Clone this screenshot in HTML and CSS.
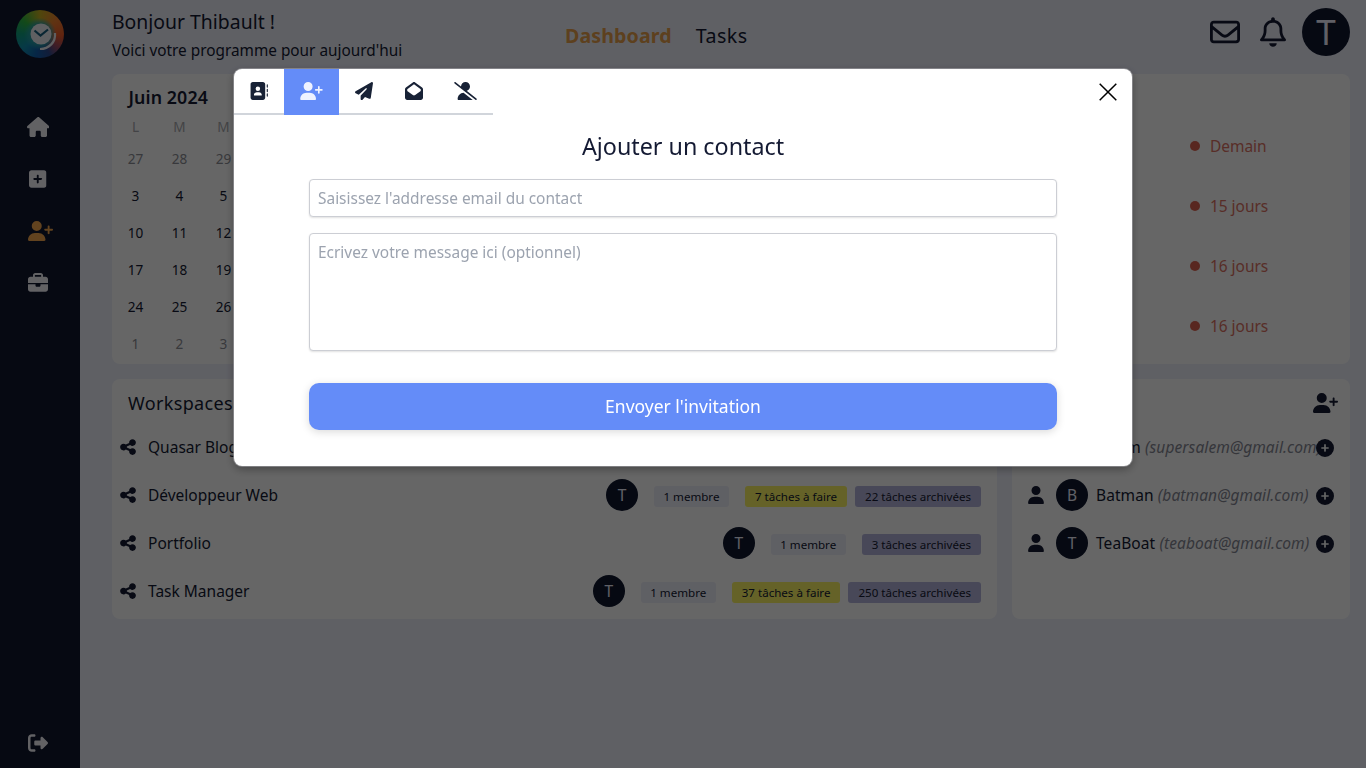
FILE: index.html
```html
<!DOCTYPE html>
<html lang="fr">
<head>
<meta charset="utf-8">
<title>Dashboard</title>
<link rel="stylesheet" href="styles.css">
</head>
<body>
<svg class="sprite" aria-hidden="true">
  <symbol id="house" viewBox="0 0 576 512"><path d="M575.8 255.5c0 18-15 32.1-32 32.1h-32l.7 160.2c0 2.7-.2 5.4-.5 8.1V472c0 22.1-17.9 40-40 40H456c-1.1 0-2.2 0-3.3-.1c-1.4 .1-2.8 .1-4.2 .1H416 392c-22.1 0-40-17.9-40-40V448 384c0-17.7-14.3-32-32-32H256c-17.7 0-32 14.3-32 32v64 24c0 22.1-17.9 40-40 40H160 128.1c-1.5 0-3-.1-4.5-.2c-1.2 .1-2.4 .2-3.6 .2H104c-22.1 0-40-17.9-40-40V360c0-.9 0-1.9 .1-2.8V287.6H32c-18 0-32-14-32-32.1c0-9 3-17 10-24L266.4 8c7-7 15-8 22-8s15 2 21 7L564.8 231.5c8 7 12 15 11 24z"/></symbol>
  <symbol id="square-plus" viewBox="0 0 448 512"><path d="M64 32C28.7 32 0 60.7 0 96V416c0 35.3 28.7 64 64 64H384c35.3 0 64-28.7 64-64V96c0-35.3-28.7-64-64-64H64zM200 344V280H136c-13.3 0-24-10.7-24-24s10.7-24 24-24h64V168c0-13.3 10.7-24 24-24s24 10.7 24 24v64h64c13.3 0 24 10.7 24 24s-10.7 24-24 24H248v64c0 13.3-10.7 24-24 24s-24-10.7-24-24z"/></symbol>
  <symbol id="user" viewBox="0 0 448 512"><path d="M224 256A128 128 0 1 0 224 0a128 128 0 1 0 0 256zm-45.7 48C79.8 304 0 383.8 0 482.3C0 498.7 13.3 512 29.7 512H418.3c16.4 0 29.7-13.3 29.7-29.7C448 383.8 368.2 304 269.7 304H178.3z"/></symbol>
  <symbol id="user-plus" viewBox="0 0 640 512"><path d="M96 128a128 128 0 1 1 256 0A128 128 0 1 1 96 128zM0 482.3C0 383.8 79.8 304 178.3 304h91.4C368.2 304 448 383.8 448 482.3c0 16.4-13.3 29.7-29.7 29.7H29.7C13.3 512 0 498.7 0 482.3zM504 312V248H440c-13.3 0-24-10.7-24-24s10.7-24 24-24h64V136c0-13.3 10.7-24 24-24s24 10.7 24 24v64h64c13.3 0 24 10.7 24 24s-10.7 24-24 24H552v64c0 13.3-10.7 24-24 24s-24-10.7-24-24z"/></symbol>
  <symbol id="briefcase" viewBox="0 0 512 512"><path d="M184 48H328c4.4 0 8 3.6 8 8V96H176V56c0-4.4 3.6-8 8-8zm-56 8V96H64C28.7 96 0 124.7 0 160v96H192 320 512V160c0-35.3-28.7-64-64-64H384V56c0-30.9-25.1-56-56-56H184c-30.9 0-56 25.1-56 56zM512 288H320v32c0 17.7-14.3 32-32 32H224c-17.7 0-32-14.3-32-32V288H0V416c0 35.3 28.7 64 64 64H448c35.3 0 64-28.7 64-64V288z"/></symbol>
  <symbol id="logout" viewBox="0 0 512 512"><path d="M377.9 105.9L500.7 228.7c7.2 7.2 11.3 17.1 11.3 27.3s-4.1 20.1-11.3 27.3L377.9 406.1c-6.4 6.4-15 9.9-24 9.9c-18.7 0-33.9-15.2-33.9-33.9l0-62.1-128 0c-17.7 0-32-14.3-32-32l0-64c0-17.7 14.3-32 32-32l128 0 0-62.1c0-18.7 15.2-33.9 33.9-33.9c9 0 17.6 3.6 24 9.9zM160 96L96 96c-17.7 0-32 14.3-32 32l0 256c0 17.7 14.3 32 32 32l64 0c17.7 0 32 14.3 32 32s-14.3 32-32 32l-64 0c-53 0-96-43-96-96L0 128C0 75 43 32 96 32l64 0c17.7 0 32 14.3 32 32s-14.3 32-32 32z"/></symbol>
  <symbol id="share" viewBox="0 0 448 512"><path d="M352 224c53 0 96-43 96-96s-43-96-96-96s-96 43-96 96c0 4 .2 8 .7 11.9l-94.1 47C145.4 170.2 121.9 160 96 160c-53 0-96 43-96 96s43 96 96 96c25.9 0 49.4-10.2 66.6-26.9l94.1 47c-.5 3.9-.7 7.8-.7 11.9c0 53 43 96 96 96s96-43 96-96s-43-96-96-96c-25.9 0-49.4 10.2-66.6 26.9l-94.1-47c.5-3.9 .7-7.8 .7-11.9s-.2-8-.7-11.9l94.1-47C302.6 213.8 326.1 224 352 224z"/></symbol>
  <symbol id="envelope" viewBox="0 0 512 512"><path d="M64 112c-8.8 0-16 7.2-16 16v22.1L220.5 291.7c20.7 17 50.4 17 71.1 0L464 150.1V128c0-8.8-7.2-16-16-16H64zM48 212.2V384c0 8.8 7.2 16 16 16H448c8.8 0 16-7.2 16-16V212.2L322 328.8c-38.4 31.5-93.7 31.5-132 0L48 212.2zM0 128C0 92.7 28.7 64 64 64H448c35.3 0 64 28.7 64 64V384c0 35.3-28.7 64-64 64H64c-35.3 0-64-28.7-64-64V128z"/></symbol>
  <symbol id="bell" viewBox="0 0 448 512"><path d="M224 0c-17.7 0-32 14.3-32 32V49.9C119.5 61.4 64 124.2 64 200v33.4c0 45.4-15.5 89.5-43.8 124.9L5.3 377c-5.8 7.2-6.9 17.1-2.9 25.4S14.8 416 24 416H424c9.2 0 17.6-5.3 21.6-13.6s2.9-18.2-2.9-25.4l-14.9-18.6C399.5 322.9 384 278.8 384 233.4V200c0-75.8-55.5-138.6-128-150.1V32c0-17.7-14.3-32-32-32zm0 96h8c57.4 0 104 46.6 104 104v33.4c0 47.9 13.9 94.6 39.7 134.6H72.3C98.1 328 112 281.3 112 233.4V200c0-57.4 46.6-104 104-104h8zm64 352H224 160c0 17 6.7 33.3 18.7 45.3s28.3 18.7 45.3 18.7s33.3-6.7 45.3-18.7s18.7-28.3 18.7-45.3z"/></symbol>
  <symbol id="plane" viewBox="0 0 512 512"><path d="M498.1 5.6c10.1 7 15.4 19.1 13.5 31.2l-64 416c-1.5 9.7-7.4 18.2-16 23s-18.9 5.4-28 1.6L284 427.7l-68.5 74.1c-8.9 9.7-22.9 12.9-35.2 8.1S160 493.2 160 480V396.4c0-4 1.5-7.8 4.2-10.7L331.8 202.8c5.8-6.3 5.6-16-.4-22s-15.7-6.4-22-.7L106 360.8 17.7 316.6C7.1 311.3 .3 300.7 0 288.9s5.9-22.8 16.1-28.7l448-256c10.7-6.1 23.9-5.5 34 1.4z"/></symbol>
  <symbol id="address-book" viewBox="0 0 512 512"><path d="M80 0C44.700 0 16 28.700 16 64V448c0 35.300 28.700 64 64 64H368c35.300 0 64-28.700 64-64V64c0-35.300-28.700-64-64-64H80zM192 288h64c44.200 0 80 35.800 80 80c0 8.800-7.200 16-16 16H128c-8.800 0-16-7.200-16-16c0-44.200 35.800-80 80-80zm-32-96a64 64 0 1 1 128 0 64 64 0 1 1 -128 0zM508 80c0-8.800-7.200-16-16-16s-16 7.200-16 16v64c0 8.800 7.200 16 16 16s16-7.200 16-16V80zM492 192c-8.800 0-16 7.200-16 16v64c0 8.800 7.200 16 16 16s16-7.200 16-16V208c0-8.800-7.200-16-16-16zm16 144c0-8.800-7.200-16-16-16s-16 7.200-16 16v64c0 8.800 7.200 16 16 16s16-7.200 16-16V336z"/></symbol>
  <symbol id="envelope-open" viewBox="0 0 512 512"><path d="M64 208.1L256 65.9 448 208.1v47.4L289.5 373c-9.7 7.2-21.4 11-33.5 11s-23.8-3.9-33.5-11L64 255.5V208.1zM256 0c-12.1 0-23.8 3.9-33.5 11L25.9 156.7C9.6 168.8 0 187.8 0 208.1V448c0 35.3 28.7 64 64 64H448c35.3 0 64-28.7 64-64V208.1c0-20.3-9.6-39.4-25.9-51.4L289.5 11C279.8 3.9 268.1 0 256 0z"/></symbol>
  <symbol id="user-slash" viewBox="0 0 640 512"><path d="M38.8 5.1C28.4-3.1 13.3-1.2 5.1 9.2S-1.2 34.7 9.2 42.9l592 464c10.4 8.2 25.5 6.3 33.7-4.1s6.3-25.5-4.1-33.7L353.3 251.6C407.9 237 448 187.2 448 128C448 57.3 390.7 0 320 0C250.2 0 193.5 55.8 192 125.2L38.8 5.1zM264.3 304.3C170.5 309.4 96 387.2 96 482.3c0 16.4 13.3 29.7 29.7 29.7H514.3c3.9 0 7.6-.7 11-2.1l-261-205.6z"/></symbol>
  <symbol id="circle-plus" viewBox="0 0 512 512"><path d="M256 512A256 256 0 1 0 256 0a256 256 0 1 0 0 512zM232 344V280H168c-13.3 0-24-10.7-24-24s10.7-24 24-24h64V168c0-13.3 10.7-24 24-24s24 10.7 24 24v64h64c13.3 0 24 10.7 24 24s-10.7 24-24 24H280v64c0 13.3-10.7 24-24 24s-24-10.7-24-24z"/></symbol>
</svg>

<div class="app">
  <aside class="sidebar">
    <div class="logo">
      <div class="logo-ring"></div>
      <svg class="logo-clock" viewBox="0 0 48 48">
        <circle class="logo-face" cx="25" cy="24" r="10.500"/>
        <path class="logo-hands" d="M18.500 20.500l6 5 7.500-6"/>
        <path class="logo-arc" d="M39 23c1 9-6 16-15 16"/>
      </svg>
    </div>
    <nav class="side-nav">
      <svg class="side-icon w-house"><use href="#house"/></svg>
      <svg class="side-icon w-square"><use href="#square-plus"/></svg>
      <svg class="side-icon w-user active"><use href="#user-plus"/></svg>
      <svg class="side-icon w-full"><use href="#briefcase"/></svg>
    </nav>
    <svg class="side-icon w-full"><use href="#logout"/></svg>
  </aside>

  <main class="main">
    <header class="header">
      <div class="greeting">
        <h1 class="hello">Bonjour Thibault !</h1>
        <p class="program">Voici votre programme pour aujourd'hui</p>
      </div>
      <nav class="top-nav">
        <a class="nav-link current">Dashboard</a>
        <a class="nav-link">Tasks</a>
      </nav>
      <div class="actions">
        <svg class="act-mail"><use href="#envelope"/></svg>
        <svg class="act-bell"><use href="#bell"/></svg>
        <div class="avatar large">T</div>
      </div>
    </header>

    <section class="card overview">
      <div class="calendar">
        <h2 class="month">Juin 2024</h2>
        <div class="days head"><span>L</span><span>M</span><span>M</span><span>J</span><span>V</span><span>S</span><span>D</span></div>
        <div class="days dim"><span>27</span><span>28</span><span>29</span><span>30</span><span>31</span><span>1</span><span>2</span></div>
        <div class="days"><span>3</span><span>4</span><span>5</span><span>6</span><span>7</span><span>8</span><span>9</span></div>
        <div class="days"><span>10</span><span>11</span><span>12</span><span>13</span><span>14</span><span>15</span><span>16</span></div>
        <div class="days"><span>17</span><span>18</span><span>19</span><span>20</span><span>21</span><span>22</span><span>23</span></div>
        <div class="days"><span>24</span><span>25</span><span>26</span><span>27</span><span>28</span><span>29</span><span>30</span></div>
        <div class="days dim"><span>1</span><span>2</span><span>3</span><span>4</span><span>5</span><span>6</span><span>7</span></div>
      </div>
      <ul class="deadlines">
        <li class="deadline"><i class="dot"></i>Demain</li>
        <li class="deadline"><i class="dot"></i>15 jours</li>
        <li class="deadline"><i class="dot"></i>16 jours</li>
        <li class="deadline"><i class="dot"></i>16 jours</li>
      </ul>
    </section>

    <div class="bottom">
      <section class="card workspaces">
        <h2 class="card-title">Workspaces</h2>
        <div class="row"><svg class="share"><use href="#share"/></svg><span class="ws-name">Quasar Blog</span></div>
        <div class="row"><svg class="share"><use href="#share"/></svg><span class="ws-name">Développeur Web</span>
          <div class="avatar">T</div><span class="badge member">1 membre</span><span class="badge todo">7 tâches à faire</span><span class="badge archived">22 tâches archivées</span></div>
        <div class="row"><svg class="share"><use href="#share"/></svg><span class="ws-name">Portfolio</span>
          <div class="avatar">T</div><span class="badge member">1 membre</span><span class="badge archived">3 tâches archivées</span></div>
        <div class="row"><svg class="share"><use href="#share"/></svg><span class="ws-name">Task Manager</span>
          <div class="avatar">T</div><span class="badge member">1 membre</span><span class="badge todo">37 tâches à faire</span><span class="badge archived">250 tâches archivées</span></div>
      </section>
      <section class="card contacts">
        <div class="contacts-head"><svg class="add-contact"><use href="#user-plus"/></svg></div>
        <div class="row contact"><svg class="person"><use href="#user"/></svg><div class="avatar">S</div><span class="c-name">Salem <em class="mail">(supersalem@gmail.com)</em></span><svg class="plus"><use href="#circle-plus"/></svg></div>
        <div class="row contact"><svg class="person"><use href="#user"/></svg><div class="avatar">B</div><span class="c-name">Batman <em class="mail">(batman@gmail.com)</em></span><svg class="plus"><use href="#circle-plus"/></svg></div>
        <div class="row contact"><svg class="person"><use href="#user"/></svg><div class="avatar">T</div><span class="c-name">TeaBoat <em class="mail">(teaboat@gmail.com)</em></span><svg class="plus"><use href="#circle-plus"/></svg></div>
      </section>
    </div>
  </main>
</div>

<div class="backdrop">
  <div class="modal">
    <div class="modal-top">
      <div class="tabs">
        <div class="tab"><svg class="tab-icon"><use href="#address-book"/></svg></div>
        <div class="tab selected"><svg class="tab-icon wide"><use href="#user-plus"/></svg></div>
        <div class="tab"><svg class="tab-icon"><use href="#plane"/></svg></div>
        <div class="tab"><svg class="tab-icon"><use href="#envelope-open"/></svg></div>
        <div class="tab"><svg class="tab-icon wide"><use href="#user-slash"/></svg></div>
      </div>
      <svg class="close" viewBox="0 0 18 18"><path d="M.7.7l16.600 16.600M17.300.7L.7 17.300" stroke="#000" stroke-width="1.500"/></svg>
    </div>
    <form class="form">
      <h2 class="form-title">Ajouter un contact</h2>
      <input class="field" type="text" placeholder="Saisissez l'addresse email du contact">
      <textarea class="field message" placeholder="Ecrivez votre message ici (optionnel)"></textarea>
      <button class="submit" type="button">Envoyer l'invitation</button>
    </form>
  </div>
</div>
</body>
</html>
```
FILE: styles.css
```css
* { box-sizing: border-box; margin: 0; padding: 0; }
body {
  height: 768px;
  overflow: hidden;
  font-family: "Noto Sans", sans-serif;
  font-size: 15.5px;
  line-height: 24px;
  color: #141a33;
  background: #eef0fb;
}
svg { flex: none; fill: currentColor; }
.sprite { display: none; }

.app { display: flex; height: 768px; }
.sidebar {
  width: 80px;
  padding: 10px 0 15px;
  display: flex;
  flex-direction: column;
  align-items: center;
  background: #0f172f;
  color: #f4f4fa;
}
.logo { display: grid; width: 48px; height: 48px; }
.logo-ring, .logo-clock { grid-area: 1 / 1; width: 48px; height: 48px; }
.logo-ring {
  border-radius: 50%;
  background:
    radial-gradient(circle, rgba(40, 160, 165, .8) 32%, transparent 48%),
    conic-gradient(#c8b020, #f08030 50deg, #f05a28 95deg, #a04a60 125deg, #2c4a90 155deg, #1060b0 190deg, #1090b0 230deg, #10a080 270deg, #30b840 310deg, #c8b020);
}
.logo-face { fill: #eef0f6; }
.logo-hands { fill: none; stroke: #17607f; stroke-width: 2.2; }
.logo-arc { fill: none; stroke: #eef0f6; stroke-width: 2.2; }
.side-nav {
  flex: 1;
  padding: 59px 0 0;
  display: flex;
  flex-direction: column;
  align-items: center;
  gap: 32px;
}
.side-icon { height: 20px; margin-right: 4px; }
.w-house { width: 22.5px; }
.w-square { width: 17.5px; }
.w-user { width: 25px; margin-right: 0; }
.w-full { width: 20px; }
.active { color: #f5a94e; }

.main { flex: 1; padding: 0 16px 0 32px; }
.header {
  height: 74px;
  display: grid;
  grid-template-columns: 453px 1fr auto;
}
.hello { padding-top: 8px; font-size: 19.4px; font-weight: 400; line-height: 28px; }
.program { padding-top: 2px; font-size: 15.35px; }
.top-nav { display: flex; gap: 24px; padding-top: 22px; font-size: 19.6px; line-height: 28px; letter-spacing: .1px; }
.nav-link:last-child { letter-spacing: .45px; }
.current { color: #e8a04c; font-weight: 700; }
.actions { display: flex; gap: 16px; padding-top: 8px; }
.act-mail { width: 30px; height: 30px; margin: 9px 4px 0 0; }
.act-bell { width: 26px; height: 30px; margin-top: 9px; }
.avatar {
  flex: none;
  width: 32px;
  height: 32px;
  border-radius: 50%;
  background: #0f172f;
  color: #eff1ff;
  text-align: center;
  line-height: 32px;
}
.avatar.large { width: 48px; height: 48px; font-size: 35px; line-height: 48px; }

.card { background: #fff; border-radius: 8px; }
.overview { height: 290px; display: flex; justify-content: space-between; }
.calendar { width: 310px; padding: 10px 0 0 1.5px; font-size: 13.6px; }
.month { padding-left: 15px; font-size: 17.8px; font-weight: 600; line-height: 26px; letter-spacing: .1px; }
.days { display: grid; grid-template-columns: repeat(7, 44px); height: 37px; line-height: 37px; text-align: center; }
.days.head { height: 30px; line-height: 34px; color: #a8a9ae; }
.days.dim { color: #8d8e96; }
.deadlines { width: 160px; padding-top: 42px; list-style: none; }
.deadline { display: flex; align-items: center; gap: 10px; height: 60px; letter-spacing: -.05px; color: #dc7264; }
.dot { width: 10px; height: 10px; border-radius: 50%; background: #dc6250; }

.bottom { display: grid; grid-template-columns: 885px 338px; gap: 15px; padding-top: 15px; }
.bottom .card { height: 240px; }
.workspaces { padding: 8px 16px 0 8px; }
.card-title { height: 36px; padding-left: 8px; font-size: 18px; font-weight: 400; line-height: 32px; letter-spacing: .35px; }
.row { display: flex; align-items: center; height: 48px; }
.share { width: 16px; height: 18px; }
.ws-name { flex: 1; padding-left: 12px; }
.badge {
  height: 21px;
  margin-top: 3px;
  padding: 0 10px;
  border-radius: 3px;
  font-size: 11.6px;
  line-height: 21px;
  letter-spacing: -.01px;
  white-space: nowrap;
}
.member { margin-left: 16px; margin-right: 16px; padding: 0 9.5px; background: #eef0fb; }
.todo { margin-right: 8px; background: #fcf664; }
.archived { background: #b4b5dc; }
.contacts { padding: 8px 16px 0; }
.contacts-head { display: flex; justify-content: flex-end; height: 36px; }
.add-contact { width: 25px; height: 20px; margin: 6px -4px 0 0; }
.person { width: 16px; height: 18px; margin-right: 12px; }
.c-name { width: 228px; padding-left: 8px; white-space: nowrap; letter-spacing: .08px; }
.mail { color: #858794; letter-spacing: .1px; }
.plus { width: 18px; height: 18px; margin-top: 2px; }

.backdrop {
  position: fixed;
  inset: 0;
  padding-top: 69px;
  background: rgba(0, 0, 0, .6);
}
.modal {
  width: 898px;
  height: 397px;
  margin: 0 auto;
  border-radius: 8px;
  overflow: hidden;
  background: #fff;
  box-shadow: 0 0 0 1px rgba(160, 160, 165, .6), 0 3px 10px rgba(0, 0, 0, .35);
}
.modal-top { display: flex; justify-content: space-between; height: 61px; padding-right: 15px; }
.tabs { display: flex; }
.tab { height: 46px; padding: 13px 15.5px 0 16.3px; border-bottom: 2px solid #d1d5db; color: #182236; }
.tab.selected { background: #648cf8; border-color: #648cf8; color: #eef2ff; }
.tab-icon { display: block; width: 18px; height: 18px; }
.tab-icon.wide { width: 23px; }
.close { width: 18px; height: 18px; margin-top: 14px; }
.form { display: flex; flex-direction: column; width: 748px; margin: 0 auto; }
.form-title { height: 49px; font-size: 23.3px; font-weight: 400; line-height: 32px; text-align: center; }
.field {
  width: 748px;
  height: 38px;
  padding: 6px 8px;
  border: 1px solid #ccced4;
  border-radius: 4px;
  font: 15.45px/24px "Noto Sans", sans-serif;
  box-shadow: 0 1px 2px rgba(0, 0, 0, .12);
  resize: none;
}
.field::placeholder { color: #9ca3af; }
.message { height: 118px; margin-top: 16px; }
.submit {
  height: 47px;
  margin-top: 32px;
  border: 0;
  border-radius: 10px;
  background: #648cf8;
  color: #fff;
  font: 17.5px/47px "Noto Sans", sans-serif;
  box-shadow: 0 2px 8px rgba(0, 0, 0, .15);
}
```
